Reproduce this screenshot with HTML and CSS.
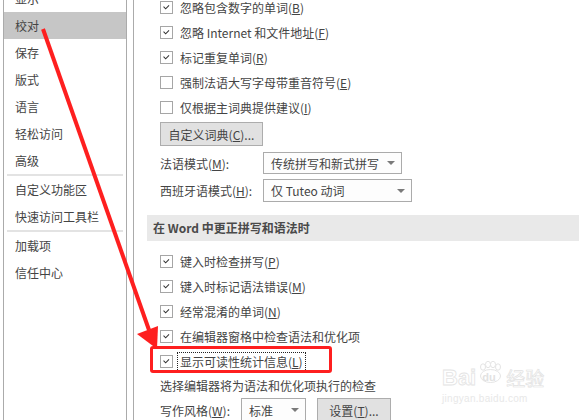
FILE: index.html
```html
<!DOCTYPE html>
<html lang="zh-CN">
<head>
<meta charset="utf-8">
<link rel="stylesheet" href="styles.css">
</head>
<body>
<div class="page">
  <nav class="sidebar">
    <ul class="nav">
      <li class="item">显示</li>
      <li class="item active">校对</li>
      <li class="item">保存</li>
      <li class="item">版式</li>
      <li class="item">语言</li>
      <li class="item">轻松访问</li>
      <li class="item">高级</li>
      <li class="sep"></li>
      <li class="item">自定义功能区</li>
      <li class="item">快速访问工具栏</li>
      <li class="sep"></li>
      <li class="item">加载项</li>
      <li class="item">信任中心</li>
    </ul>
  </nav>
  <div class="gap"></div>
  <main class="content">
    <div class="group top">
      <div class="opt"><span class="cb on"><svg viewBox="0 0 13 13"><polyline points="3,5.5 5.5,8 9.5,4"/></svg></span><span class="lbl">忽略包含数字的单词(<u>B</u>)</span></div>
      <div class="opt"><span class="cb on"><svg viewBox="0 0 13 13"><polyline points="3,5.5 5.5,8 9.5,4"/></svg></span><span class="lbl">忽略 Internet 和文件地址(<u>F</u>)</span></div>
      <div class="opt"><span class="cb on"><svg viewBox="0 0 13 13"><polyline points="3,5.5 5.5,8 9.5,4"/></svg></span><span class="lbl">标记重复单词(<u>R</u>)</span></div>
      <div class="opt"><span class="cb"></span><span class="lbl">强制法语大写字母带重音符号(<u>E</u>)</span></div>
      <div class="opt"><span class="cb"></span><span class="lbl">仅根据主词典提供建议(<u>I</u>)</span></div>
      <div class="btnrow"><span class="btn dict">自定义词典(<u>C</u>)...</span></div>
      <div class="field fr"><span class="flabel w103">法语模式(<u>M</u>):</span><span class="select s1"><span>传统拼写和新式拼写</span><i class="tri"></i></span></div>
      <div class="field es"><span class="flabel w103">西班牙语模式(<u>H</u>):</span><span class="select s2"><span>仅 Tuteo 动词</span><i class="tri"></i></span></div>
    </div>
    <div class="header">在 Word 中更正拼写和语法时</div>
    <div class="group">
      <div class="opt"><span class="cb on"><svg viewBox="0 0 13 13"><polyline points="3,5.5 5.5,8 9.5,4"/></svg></span><span class="lbl">键入时检查拼写(<u>P</u>)</span></div>
      <div class="opt"><span class="cb on"><svg viewBox="0 0 13 13"><polyline points="3,5.5 5.5,8 9.5,4"/></svg></span><span class="lbl">键入时标记语法错误(<u>M</u>)</span></div>
      <div class="opt"><span class="cb on"><svg viewBox="0 0 13 13"><polyline points="3,5.5 5.5,8 9.5,4"/></svg></span><span class="lbl">经常混淆的单词(<u>N</u>)</span></div>
      <div class="opt"><span class="cb on"><svg viewBox="0 0 13 13"><polyline points="3,5.5 5.5,8 9.5,4"/></svg></span><span class="lbl">在编辑器窗格中检查语法和优化项</span></div>
      <div class="opt"><span class="cb on"><svg viewBox="0 0 13 13"><polyline points="3,5.5 5.5,8 9.5,4"/></svg></span><span class="lbl focus">显示可读性统计信息(<u>L</u>)</span></div>
      <div class="note">选择编辑器将为语法和优化项执行的检查</div>
      <div class="field ws"><span class="flabel w81">写作风格(<u>W</u>):</span><span class="select s3"><span>标准</span><i class="tri"></i></span><span class="btn set">设置(<u>T</u>)...</span></div>
    </div>
  </main>

  <div class="redbox"></div>
  <svg class="arrow" width="579" height="420" viewBox="0 0 579 420">
    <line x1="43" y1="29" x2="149" y2="330" />
    <polygon points="157,349 137,334 158,326" />
  </svg>
  <div class="watermark">
    <div class="wm-logo"><span class="wm-b">Bai</span><span class="wm-paw"><svg width="24" height="22" viewBox="0 0 24 22"><ellipse cx="5" cy="6" rx="2.5" ry="3.2"/><ellipse cx="10" cy="3.5" rx="2.5" ry="3.2"/><ellipse cx="15" cy="3.5" rx="2.5" ry="3.2"/><ellipse cx="20" cy="6" rx="2.5" ry="3.2"/><ellipse cx="12.5" cy="15" rx="10" ry="6.5"/></svg><span class="wm-du">du</span></span><span class="wm-cn">经验</span></div>
    <div class="wm-url">jingyan.baidu.com</div>
  </div>
</div>
</body>
</html>
```
FILE: styles.css
```css
* { box-sizing: border-box; }
html, body { margin: 0; padding: 0; }
body {
  width: 579px;
  height: 420px;
  overflow: hidden;
  background: #ffffff;
  font-family: "Noto Sans CJK SC", "Noto Sans", sans-serif;
  font-size: 12px;
  color: #444444;
}
u { text-decoration: underline; text-underline-offset: 1px; }
.page {
  position: relative;
  display: flex;
  width: 579px;
  height: 420px;
}
.sidebar {
  margin-left: 3px;
  width: 124px;
  height: 420px;
  border-left: 1px solid #ababab;
  border-right: 1px solid #ababab;
  flex: none;
}
.nav {
  list-style: none;
  margin: -15px 0 0 0;
  padding: 0;
}
.item {
  height: 27px;
  line-height: 27px;
  padding-left: 11px;
  white-space: nowrap;
}
.item.active { background: #c6c6c6; }
.sep {
  height: 2px;
  margin: 0 3px;
  background: #e3e3e3;
}
.gap { width: 6px; flex: none; }
.content {
  flex: 1;
  border-left: 1px solid #ababab;
  height: 420px;
  display: flex;
  flex-direction: column;
  padding-left: 13px;
}
.group { padding-left: 13px; display: flex; flex-direction: column; }
.group.top { margin-top: -5px; }
.opt {
  height: 25px;
  display: flex;
  align-items: center;
  white-space: nowrap;
}
.cb {
  width: 13px;
  height: 13px;
  border: 1px solid #a6a6a6;
  background: #fff;
  flex: none;
  margin-right: 7px;
  display: flex;
}
.cb svg { width: 11px; height: 11px; }
.cb polyline { fill: none; stroke: #333; stroke-width: 1.2; }
.lbl { line-height: 18px; }
.lbl.focus {
  outline: 1px dotted #222;
  outline-offset: 0;
  padding: 0 2px;
  margin-left: -2px;
}
.btnrow { margin-top: 2px; display: flex; }
.btn {
  display: inline-flex;
  align-items: center;
  justify-content: center;
  height: 24px;
  background: #e1e1e1;
  border: 1px solid #adadad;
  white-space: nowrap;
}
.btn.dict { width: 103px; }
.field { display: flex; align-items: center; white-space: nowrap; }
.field.fr { margin-top: 6px; }
.field.es { margin-top: 5px; }
.flabel { flex: none; }
.w103 { width: 103px; }
.w81 { width: 81px; }
.select {
  display: flex;
  align-items: center;
  justify-content: space-between;
  height: 22px;
  border: 1px solid #ababab;
  background: #fdfdfd;
  padding: 0 6px 0 7px;
}
.select.s1 { width: 139px; }
.select.s2 { width: 149px; height: 23px; }
.select.s3 { width: 65px; height: 24px; }
.tri {
  width: 0;
  height: 0;
  border-left: 4px solid transparent;
  border-right: 4px solid transparent;
  border-top: 4px solid #7a7a7a;
}
.header {
  margin-top: 13px;
  height: 26px;
  line-height: 26px;
  background: #e9e9e9;
  padding-left: 6px;
  font-weight: bold;
  color: #4a4a4a;
}
.header + .group { margin-top: 8px; }
.note { height: 24px; line-height: 24px; white-space: nowrap; }
.field.ws .btn.set { width: 74px; margin-left: 11px; }
.redbox {
  position: absolute;
  left: 150px;
  top: 346px;
  width: 182px;
  height: 27px;
  border: 3px solid #fe1f1f;
  border-radius: 3px;
}
.arrow { position: absolute; left: 0; top: 0; }
.arrow line { stroke: #fe1f1f; stroke-width: 4; }
.arrow polygon { fill: #fe1f1f; }
.watermark {
  position: absolute;
  left: 442px;
  top: 355px;
  color: #f0f0f0;
  font-family: "Liberation Sans", sans-serif;
}
.wm-logo { display: flex; align-items: flex-end; height: 34px; }
.wm-b { font-size: 22px; font-weight: bold; line-height: 22px; color: #ffffff; -webkit-text-stroke: 0.8px #e4e4e4; }
.wm-paw { position: relative; width: 24px; height: 34px; margin: 0 2px; }
.wm-paw svg { position: absolute; left: 0; top: 6px; }
.wm-paw svg ellipse { fill: #fff; stroke: #e4e4e4; stroke-width: 1; }
.wm-du { position: absolute; left: 4px; top: 16px; font-size: 11px; font-weight: bold; color: #e2e2e2; }
.wm-cn { font-family: "Noto Sans CJK SC", sans-serif; font-size: 19px; line-height: 22px; color: #ffffff; -webkit-text-stroke: 0.7px #e2e2e2; margin-left: 2px; }
.wm-url { font-size: 10px; color: #e8e8e8; margin-top: 4px; letter-spacing: 0.3px; }
```
